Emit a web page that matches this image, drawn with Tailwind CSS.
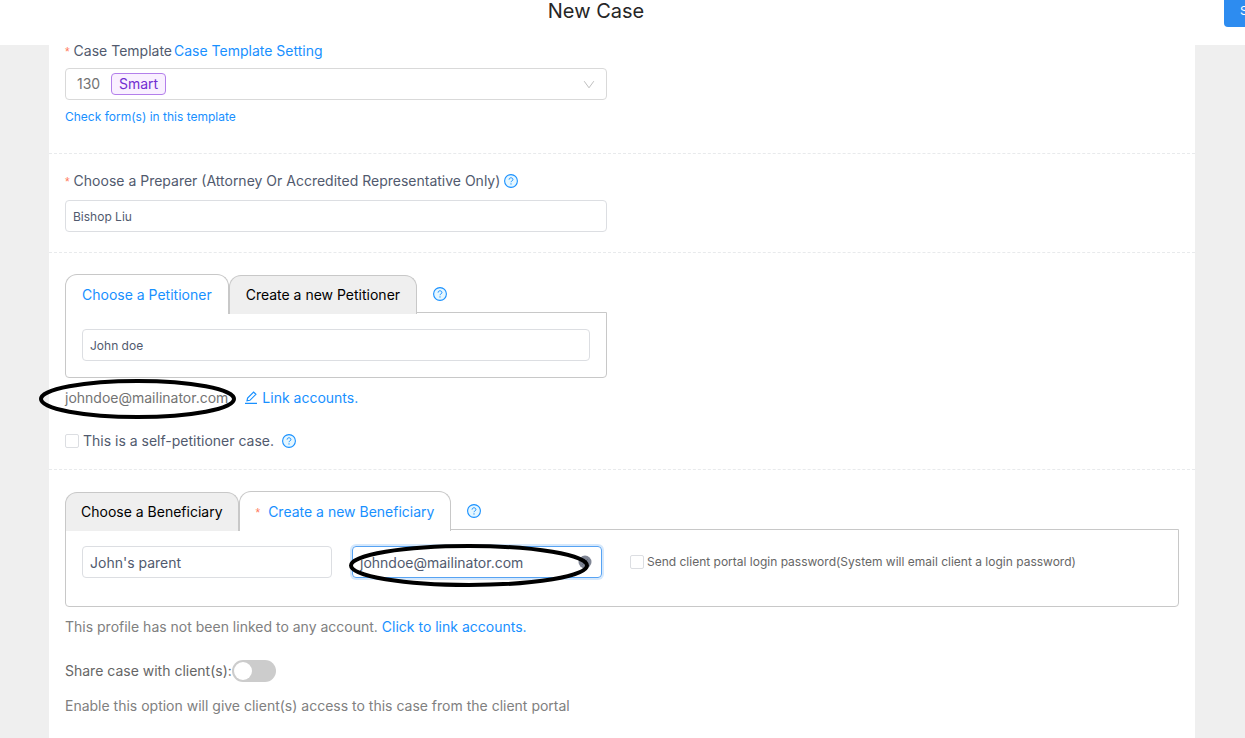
<!DOCTYPE html>
<html lang="en">
<head>
    <meta charset="UTF-8">
    <meta name="viewport" content="width=device-width, initial-scale=1.0">
    <title>New Case</title>
    <script src="https://cdn.jsdelivr.net/npm/@tailwindcss/browser@4"></script>
</head>
<body class="bg-[#efefef] font-['Inter',sans-serif] text-sm leading-5 text-[#515a6e]">
    <!-- Shared icons -->
    <svg class="hidden">
        <symbol id="icon-help" viewBox="0 0 14 14">
            <circle cx="7" cy="7" r="6.4" fill="#e6f7ff" stroke="#1890ff" stroke-width="1.1" />
            <path d="M5.1 5.6C5.1 4.4 5.9 3.8 7 3.8s1.9.7 1.9 1.7c0 .8-.5 1.2-1.1 1.5-.5.3-.8.6-.8 1.2" fill="none" stroke="#1890ff" stroke-width="1" />
            <circle cx="7" cy="9.9" r=".65" fill="#1890ff" />
        </symbol>
    </svg>

    <div class="flex min-h-screen flex-col overflow-hidden">
        <!-- Header -->
        <header class="flex h-[45px] shrink-0 items-end overflow-hidden bg-white pb-[18px]">
            <h1 class="flex-1 text-center text-xl leading-8 text-[#262626]">New Case</h1>
            <button type="button" class="-mr-[59px] ml-8 h-8 w-20 shrink-0 rounded bg-[#2d8cf0] px-4 text-left text-xs text-white">Submit</button>
        </header>

        <main class="mr-[50px] ml-[49px] flex-1 bg-white">
            <!-- Case template -->
            <section class="-mt-1 border-b border-dashed border-[#e8eaec] px-4 pb-[26px]">
                <div class="flex gap-0.5">
                    <label for="template"><span class="font-['Liberation_Sans'] text-xs text-[#ff7a5c]">*</span> Case Template</label>
                    <a href="#" class="text-[#1890ff]">Case Template Setting</a>
                </div>
                <div class="relative mt-[7px] max-w-[542px]">
                    <select id="template" class="block h-8 w-full appearance-none rounded border border-[#d9d9d9] bg-white px-[11px] text-[#737373]">
                        <option>130</option>
                    </select>
                    <span class="pointer-events-none absolute top-[5px] left-[46px] rounded border border-[#b37feb] bg-[#f9f0ff] px-[7px] text-[#722ed1]">Smart</span>
                    <svg class="pointer-events-none absolute top-[11px] right-3 h-3 w-3" viewBox="0 0 12 12" fill="none" stroke="#bfbfbf">
                        <path d="M1.2 2.2 6 8.8l4.8-6.6" />
                    </svg>
                </div>
                <a href="#" class="mt-[7px] block text-xs leading-5 text-[#1890ff]">Check form(s) in this template</a>
            </section>

            <!-- Preparer -->
            <section class="border-b border-dashed border-[#e8eaec] px-4 pt-[17px] pb-5">
                <div class="flex items-center gap-1">
                    <label for="preparer"><span class="font-['Liberation_Sans'] text-xs text-[#ff7a5c]">*</span> Choose a Preparer (Attorney Or Accredited Representative Only)</label>
                    <svg class="h-3.5 w-3.5"><use href="#icon-help" /></svg>
                </div>
                <input id="preparer" type="text" value="Bishop Liu" class="mt-[9px] block h-8 w-full max-w-[542px] rounded border border-[#dcdee2] px-[7px] text-xs">
            </section>

            <!-- Petitioner -->
            <section class="border-b border-dashed border-[#e8eaec] px-4 pt-[21px] pb-[18px]">
                <div class="relative z-10 -mb-0.5 flex items-end">
                    <button type="button" class="h-10 rounded-t-xl border border-b-0 border-[#c8c8c8] bg-white px-4 text-[#1890ff]">Choose a Petitioner</button>
                    <button type="button" class="h-[39px] rounded-t-xl border border-b-0 border-[#c8c8c8] bg-[#efefef] px-4 text-black">Create a new Petitioner</button>
                    <svg class="mb-[13px] ml-4 h-3.5 w-3.5"><use href="#icon-help" /></svg>
                </div>
                <div class="max-w-[542px] rounded-b border border-[#c8c8c8] p-4">
                    <input type="text" value="John doe" aria-label="Petitioner" class="block h-8 w-full rounded border border-[#dcdee2] px-[7px] text-xs">
                </div>
                <div class="mt-2.5 flex items-center gap-4">
                    <div class="relative text-[#737373]">
                        johndoe@mailinator.com
                        <svg class="absolute -top-[9px] -left-[26px] h-10 w-[197px]" viewBox="0 0 197 40" fill="none" stroke="#000" stroke-width="4">
                            <ellipse cx="98.5" cy="20" rx="96.5" ry="18" />
                        </svg>
                    </div>
                    <a href="#" class="flex items-center gap-1 text-[#1890ff]">
                        <svg class="h-3.5 w-3.5" viewBox="0 0 14 14" fill="none" stroke="currentColor" stroke-width="1.2">
                            <path d="M1 12.4h12M3 9.8l.6-2.8 6-6 2.3 2.3-6 6z" />
                        </svg>
                        Link accounts.
                    </a>
                </div>
                <div class="mt-[23px] flex items-center">
                    <input id="self" type="checkbox" class="mr-1 h-3.5 w-3.5 appearance-none rounded-xs border border-[#dcdee2] bg-white">
                    <label for="self">This is a self-petitioner case.</label>
                    <svg class="ml-2 h-3.5 w-3.5"><use href="#icon-help" /></svg>
                </div>
            </section>

            <!-- Beneficiary -->
            <section class="px-4 pt-[21px]">
                <div class="relative z-10 -mb-0.5 flex items-end">
                    <button type="button" class="h-[39px] rounded-t-xl border border-b-0 border-[#c8c8c8] bg-[#efefef] px-[15px] text-black">Choose a Beneficiary</button>
                    <button type="button" class="h-10 rounded-t-xl border border-b-0 border-[#c8c8c8] bg-white px-4 text-[#1890ff]"><span class="mr-1 font-['Liberation_Sans'] text-xs text-[#ff7a5c]">*</span> Create a new Beneficiary</button>
                    <svg class="mb-[13px] ml-4 h-3.5 w-3.5"><use href="#icon-help" /></svg>
                </div>
                <div class="flex items-start rounded-b border border-[#c8c8c8] px-4 pt-4 pb-7">
                    <input type="text" value="John's parent" aria-label="Beneficiary name" class="mr-5 h-8 w-[250px] rounded border border-[#dcdee2] px-[7px]">
                    <div class="relative mr-7">
                        <input type="email" value="johndoe@mailinator.com" aria-label="Beneficiary email" class="block h-8 w-[250px] rounded border border-[#57a3f3] px-[7px] ring-2 ring-[#2d8cf0]/20">
                        <svg class="absolute top-[9px] right-2.5 h-3.5 w-3.5" viewBox="0 0 14 14">
                            <circle cx="7" cy="7" r="6.5" fill="#808695" />
                            <path d="m4.5 4.5 5 5m0-5-5 5" stroke="#515a6e" />
                        </svg>
                        <svg class="absolute -top-0.5 -left-[3px] h-[43px] w-[240px]" viewBox="0 0 240 43" fill="none" stroke="#000" stroke-width="4">
                            <ellipse cx="120" cy="21.5" rx="118" ry="19.5" />
                        </svg>
                    </div>
                    <label class="flex h-8 items-center gap-[3px] text-xs text-[#666]">
                        <input type="checkbox" class="h-3.5 w-3.5 appearance-none rounded-xs border border-[#dcdee2] bg-white">
                        Send client portal login password(System will email client a login password)
                    </label>
                </div>
                <p class="mt-2.5 text-[#808080]">This profile has not been linked to any account. <a href="#" class="text-[#1890ff]">Click to link accounts.</a></p>
                <div class="mt-[23px] flex items-center text-[#666]">
                    <label for="share">Share case with client(s):</label>
                    <input id="share" type="checkbox" role="switch" class="h-[22px] w-11 appearance-none rounded-full bg-[#ccc] p-0.5 before:block before:h-[18px] before:w-[18px] before:rounded-full before:bg-white before:content-[''] checked:bg-[#2d8cf0]">
                </div>
                <p class="mt-3.5 text-[#808080]">Enable this option will give client(s) access to this case from the client portal</p>
            </section>
        </main>
    </div>
</body>
</html>
